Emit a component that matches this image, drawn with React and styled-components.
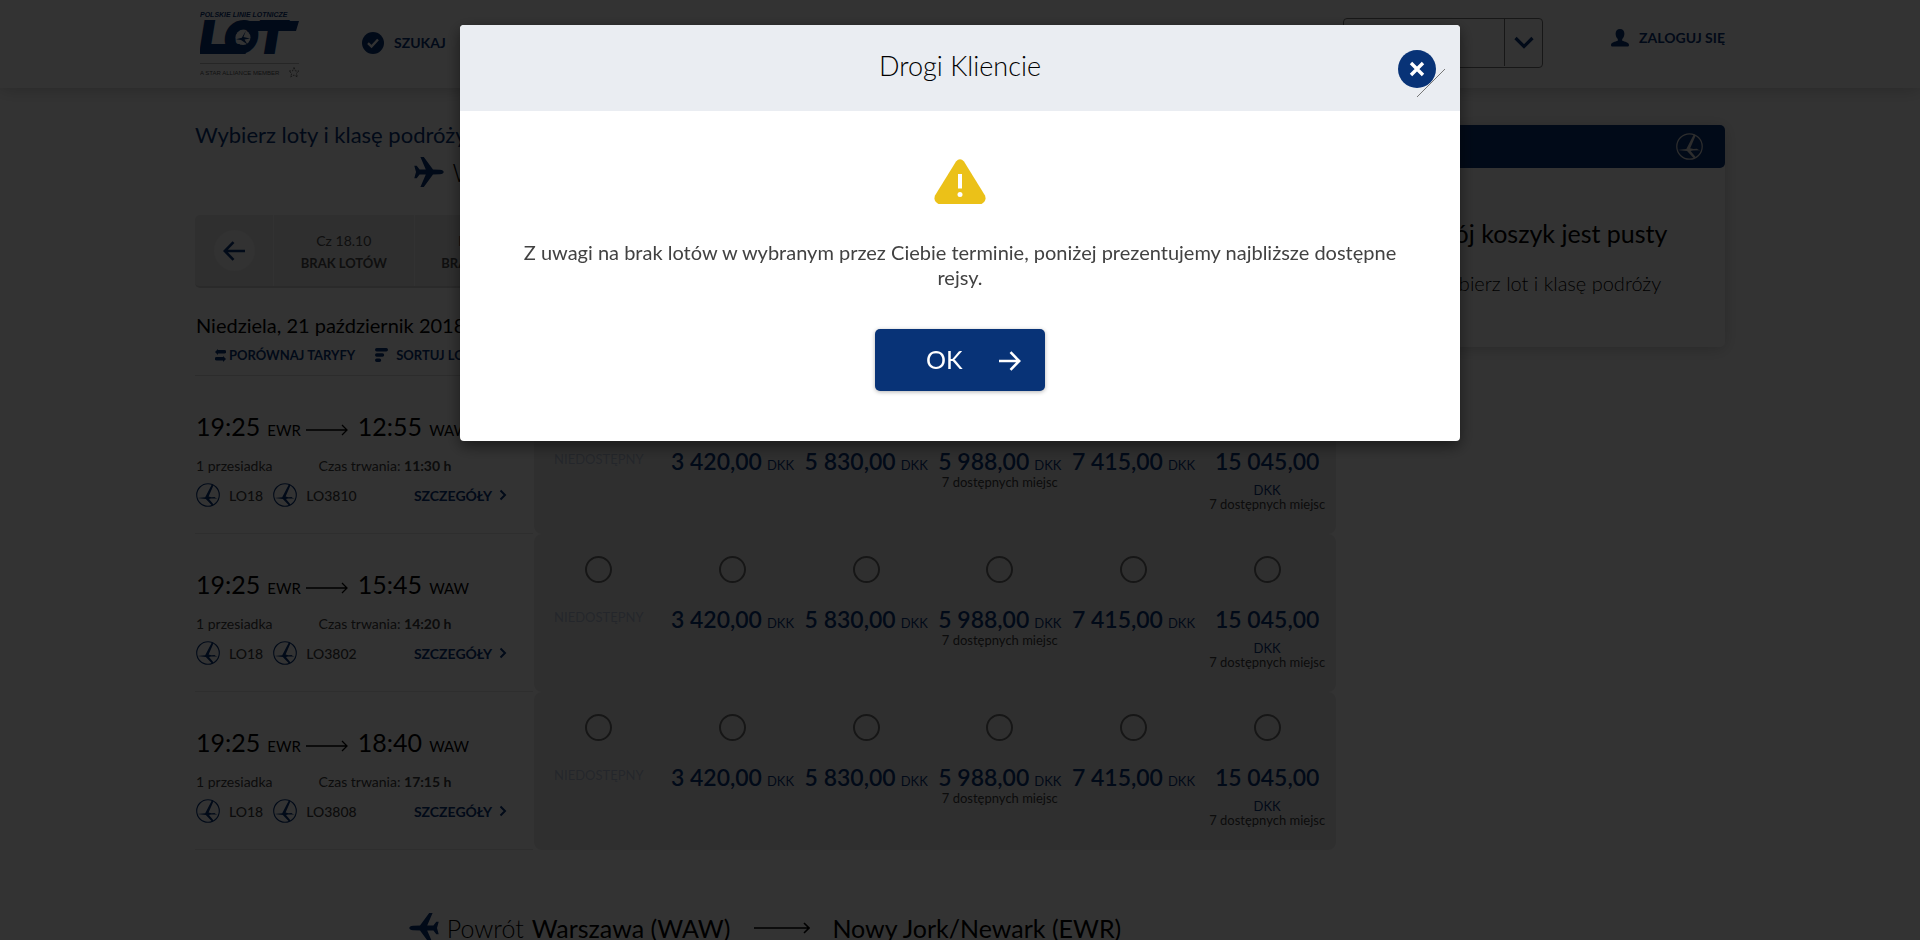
import React from "react";
import styled, { createGlobalStyle } from "styled-components";

const NAVY = "#083377";

const GlobalStyle = createGlobalStyle`
  *, *::before, *::after { box-sizing: border-box; }
  html, body { margin: 0; overflow: hidden; }
  body { background: #fff; color: #000; font-family: Lato, "Open Sans", sans-serif; font-size: 14px; }
  a { color: inherit; text-decoration: none; }
  button, select { font-family: inherit; cursor: pointer; }
  h1, h2, h3, p, ul { margin: 0; padding: 0; font-weight: 400; }
  ul { list-style: none; }
`;

const Header = styled.header`
  height: 88px;
  box-shadow: 0 2px 16px rgba(0, 0, 0, 0.2);
`;

const Container = styled.div`
  max-width: 1530px;
  margin: 0 auto;
  display: flex;
`;

const HeaderInner = styled(Container)`
  align-items: flex-start;
`;

const LogoLink = styled.a`
  padding: 10px 0 0 5px;
  svg { display: block; }
`;

const NavLink = styled.a`
  display: flex;
  align-items: center;
  gap: 10px;
  color: ${NAVY};
  font-weight: 700;
  line-height: 22px;
`;

const SearchLink = styled(NavLink)`
  margin: 32px 0 0 58px;
`;

const LoginLink = styled(NavLink)`
  margin: 27px 0 0 68px;
`;

const SelectBox = styled.div`
  position: relative;
  width: 200px;
  height: 50px;
  margin: 18px 0 0 auto;
  border: 1px solid #757575;
  border-radius: 4px;
`;

const MarketSelect = styled.select`
  appearance: none;
  width: 100%;
  height: 100%;
  border: 0;
  background: transparent;
`;

const SelectArrow = styled.span`
  position: absolute;
  top: 0;
  right: 0;
  width: 38px;
  height: 47px;
  border-left: 1px solid #757575;
  display: flex;
  align-items: center;
  justify-content: center;
  pointer-events: none;
`;

const Page = styled(Container)`
  gap: 30px;
  padding-top: 37px;
  align-items: flex-start;
`;

const Results = styled.main`
  flex: 1;
  min-width: 0;
`;

const PageTitle = styled.h1`
  color: ${NAVY};
  font-size: 22px;
  line-height: 26px;
  margin-top: -3px;
`;

const Route = styled.h2`
  display: flex;
  align-items: center;
  justify-content: center;
  gap: 8px;
  height: 34px;
  font-size: 25px;
  line-height: 34px;
  margin-top: ${(p) => (p.$return ? "61px" : "7px")};
  svg { flex: none; }
`;

const RouteLabel = styled.span`
  font-weight: 300;
`;

const RouteArrow = styled.span`
  display: flex;
  margin: 0 14px 0 16px;
`;

const Days = styled.ul`
  display: flex;
  height: 73px;
  margin-top: 26px;
  background: #ebebeb;
  border-bottom: 2px solid #d2d2d2;
  border-radius: 5px;
`;

const Day = styled.li`
  flex: 1;
  border-left: 1px solid #fafafa;
  text-align: center;
  padding-top: 15px;
  color: #4a4a4a;
  line-height: 22px;
`;

const DayStatus = styled.strong`
  display: block;
  font-size: 13px;
`;

const DayArrowCell = styled.li`
  width: 78px;
  display: flex;
  align-items: center;
  justify-content: center;
  border-left: ${(p) => (p.$last ? "1px solid #fafafa" : "0")};
`;

const DayArrow = styled.button`
  width: 41px;
  height: 41px;
  border: 0;
  padding: 0;
  border-radius: 50%;
  background: #f7f7f7;
  display: flex;
  align-items: center;
  justify-content: center;
`;

const DateTitle = styled.h3`
  font-size: 20px;
  line-height: 24px;
  margin-top: 25px;
  padding-left: 1px;
`;

const Tools = styled.div`
  display: flex;
  align-items: center;
  gap: 20px;
  height: 39px;
  padding: 0 0 2px 20px;
  border-bottom: 1px solid #dcdcdc;
`;

const ToolLink = styled.a`
  display: flex;
  align-items: center;
  gap: ${(p) => (p.$wide ? "8px" : "3px")};
  color: ${NAVY};
  font-size: 13px;
  font-weight: 700;
`;

const FlightRow = styled.li`
  display: flex;
  height: 158px;
`;

const FlightInfo = styled.div`
  width: 338px;
  flex: none;
  border-bottom: 1px solid #e6e6e6;
  padding: 34px 26px 0 1px;
`;

const Times = styled.div`
  display: flex;
  align-items: baseline;
  font-size: 25px;
  line-height: 32px;
`;

const Airport = styled.span`
  font-size: 15px;
  margin-left: 7px;
`;

const TimeArrow = styled.span`
  margin: 0 10px 0 5px;
  svg { display: block; }
`;

const Stops = styled.div`
  display: flex;
  gap: 46px;
  margin-top: 9px;
  line-height: 22px;
  color: #3c3c3c;
`;

const Flights = styled.div`
  display: flex;
  align-items: center;
  margin-top: 6px;
  height: 24px;
  color: #3c3c3c;
  font-weight: 500;
`;

const FlightNo = styled.span`
  display: flex;
  align-items: center;
  gap: 9px;
  margin-right: 10px;
`;

const DetailsLink = styled.a`
  display: flex;
  align-items: center;
  gap: 7px;
  margin-left: auto;
  color: ${NAVY};
  font-weight: 700;
`;

const Fares = styled.div`
  flex: 1;
  display: grid;
  grid-template-columns: repeat(6, minmax(0, 1fr));
  background: #ebebeb;
  border-radius: 8px;
  margin-left: 1px;
  margin-right: -1px;
`;

const Fare = styled.label`
  display: flex;
  flex-direction: column;
  align-items: center;
  padding: 22px 4px 0 0;
  color: ${NAVY};
`;

const FareRadio = styled.input`
  appearance: none;
  flex: none;
  width: 27px;
  height: 27px;
  margin: 0 0 18px;
  border: 2px solid #6e6e6e;
  border-radius: 50%;
`;

const Price = styled.span`
  display: flex;
  flex-wrap: wrap;
  align-items: baseline;
  justify-content: center;
  column-gap: 5px;
  font-size: 23px;
  font-weight: 600;
  line-height: 36px;
`;

const Currency = styled.span`
  font-size: 13px;
  font-weight: 400;
  line-height: 22px;
`;

const Seats = styled.span`
  color: #3c3c3c;
  font-size: 13px;
  line-height: 16px;
  margin-top: -5px;
`;

const Unavailable = styled.span`
  color: #b4bfd4;
  font-size: 13px;
  line-height: 32px;
`;

const Basket = styled.aside`
  width: 360px;
  flex: none;
  height: 222px;
  border-radius: 5px;
  box-shadow: 0 2px 16px rgba(0, 0, 0, 0.2);
  text-align: center;
`;

const BasketHead = styled.div`
  display: flex;
  align-items: center;
  justify-content: flex-end;
  height: 43px;
  padding-right: 22px;
  color: #e0e0e0;
  background: ${NAVY};
  border-radius: 5px;
`;

const BasketTitle = styled.h2`
  font-size: 25px;
  line-height: 30px;
  margin-top: 50px;
`;

const BasketText = styled.p`
  font-size: 20px;
  font-weight: 300;
  line-height: 24px;
  margin-top: 23px;
`;

const Overlay = styled.div`
  position: fixed;
  inset: 0;
  padding: 25px 20px;
  background: rgba(0, 0, 0, 0.8);
`;

const Dialog = styled.section`
  max-width: 1000px;
  margin: 0 auto;
  background: #fff;
  border-radius: 4px;
  overflow: hidden;
  box-shadow: 0 5px 15px rgba(0, 0, 0, 0.5);
`;

const DialogHead = styled.div`
  position: relative;
  height: 86px;
  padding-top: 24px;
  background: #eaedf2;
  text-align: center;
`;

const DialogTitle = styled.h2`
  font-size: 27px;
  font-weight: 300;
  line-height: 34px;
`;

const CloseButton = styled.button`
  position: absolute;
  top: 25px;
  right: 15px;
  width: 48px;
  height: 48px;
  padding: 0;
  border: 0;
  background: transparent;
  svg { display: block; }
`;

const DialogBody = styled.div`
  display: flex;
  flex-direction: column;
  align-items: center;
  padding: 48px 60px 50px;
`;

const Message = styled.p`
  margin-top: 35px;
  color: #424242;
  font-size: 20px;
  line-height: 25px;
  text-align: center;
`;

const OkButton = styled.button`
  display: flex;
  align-items: center;
  justify-content: space-between;
  width: 170px;
  height: 62px;
  margin-top: 39px;
  padding: 0 24px 2px 51px;
  border: 0;
  border-radius: 5px;
  background: ${NAVY};
  color: #fff;
  font-size: 25px;
  box-shadow: 0 1px 4px rgba(0, 0, 0, 0.3);
  svg { margin-top: 4px; }
`;

const Crane = ({ size }) => (
  <svg width={size} height={size} viewBox="0 0 24 24" aria-hidden="true">
    <circle cx="12" cy="12" r="11.3" fill="none" stroke="currentColor" strokeWidth="1.1" />
    <path
      d="M15.8 1.4 17.6 2 12.6 13.6 15.5 14.2 18.6 14 19.8 14.9 21.8 15.4 15 15.6 13 16 17.6 21.6 16 22.6 9.8 16 1.4 15 9.2 14.2Z"
      fill="currentColor"
    />
  </svg>
);

const EmblemColor = styled.span`
  display: flex;
  color: ${NAVY};
`;

const Emblem = () => (
  <EmblemColor><Crane size={24} /></EmblemColor>
);

const Plane = ({ left }) => (
  <svg width="30" height="30" viewBox="0 0 30 30" aria-hidden="true">
    <path
      transform={left ? "translate(30 0) scale(-1 1)" : undefined}
      d="M.3 8.8h2.4L5.6 12.6h6.2L6.4 0h3.4L19 12.4l7 .3c2.4.2 3.7 1.2 3.7 2.3s-1.3 2.1-3.7 2.3l-7 .3L9.8 30H6.4l5.4-12.6H5.6L2.7 21.2H.3L2 15Z"
      fill={NAVY}
    />
  </svg>
);

const LongArrow = ({ width, stroke = 1.6 }) => (
  <svg width={width} height="12" viewBox={`0 0 ${width} 12`} aria-hidden="true">
    <path
      d={`M0 6H${width - 1}M${width - 6} 1 ${width - 1} 6 ${width - 6} 11`}
      fill="none"
      stroke="#000"
      strokeWidth={stroke}
    />
  </svg>
);

const ShortArrow = ({ left, color }) => (
  <svg width="22" height="20" viewBox="0 0 22 20" aria-hidden="true">
    <path
      transform={left ? "translate(22 0) scale(-1 1)" : undefined}
      d="M0 10H20M11.5 1.2 20.2 10 11.5 18.8"
      fill="none"
      stroke={color}
      strokeWidth="2.6"
    />
  </svg>
);

const Logo = () => (
  <svg width="104" height="68" viewBox="0 0 104 68" role="img" aria-label="LOT">
    <text x="0" y="7" fontFamily="Liberation Sans" fontSize="7" fontWeight="700" fontStyle="italic" fill={NAVY}>
      POLSKIE LINIE LOTNICZE
    </text>
    <text x="0" y="43" fontFamily="Inter" fontSize="44" fontWeight="900" fontStyle="italic" fill={NAVY} stroke={NAVY} strokeWidth="2">
      LOT
    </text>
    <path d="M46 11H99L96 21H52ZM2 34H40L46 44H0Z" fill={NAVY} />
    <circle cx="43" cy="27.5" r="7.5" fill="#fff" />
    <path d="M46 20.5 43.5 27 50 28.5 44.5 29.5 47.5 34.5 41 30 36 29.2 41.8 27.8Z" fill={NAVY} />
    <path d="M0 53.5H99" stroke="#bdbdbd" />
    <text x="0" y="65" fontFamily="Liberation Sans" fontSize="6" fill="#555">
      A STAR ALLIANCE MEMBER
    </text>
    <path d="M94 57.5 95.5 61 99 61 96.3 63.4 97.4 67 94 65 90.6 67 91.7 63.4 89 61 92.5 61Z" fill="none" stroke="#777" strokeDasharray="2 1" />
  </svg>
);

const FARES = [
  { id: "a" },
  { id: "b", price: "3 420,00" },
  { id: "c", price: "5 830,00" },
  { id: "d", price: "5 988,00", seats: "7 dostępnych miejsc" },
  { id: "e", price: "7 415,00" },
  { id: "f", price: "15 045,00", seats: "7 dostępnych miejsc" },
];

const FLIGHTS = [
  { arrival: "12:55", duration: "11:30 h", second: "LO3810" },
  { arrival: "15:45", duration: "14:20 h", second: "LO3802" },
  { arrival: "18:40", duration: "17:15 h", second: "LO3808" },
];

const DAYS = [
  { id: 18, date: "Cz 18.10", status: "BRAK LOTÓW" },
  { id: 19, date: "Pt 19.10", status: "BRAK LOTÓW" },
  { id: 20 },
  { id: 21 },
  { id: 22 },
  { id: 23 },
  { id: 24 },
];

const Flight = ({ arrival, duration, second }) => (
  <FlightRow>
    <FlightInfo>
      <Times>
        19:25<Airport>EWR</Airport>
        <TimeArrow><LongArrow width={42} stroke={1.3} /></TimeArrow>
        {arrival}<Airport>WAW</Airport>
      </Times>
      <Stops>
        <span>1 przesiadka</span>
        <span>Czas trwania: <b>{duration}</b></span>
      </Stops>
      <Flights>
        <FlightNo><Emblem />LO18</FlightNo>
        <FlightNo><Emblem />{second}</FlightNo>
        <DetailsLink href="#details">
          SZCZEGÓŁY
          <svg width="8" height="12" viewBox="0 0 8 12" aria-hidden="true">
            <path d="M1.5 1.5 6 6 1.5 10.5" fill="none" stroke={NAVY} strokeWidth="2" />
          </svg>
        </DetailsLink>
      </Flights>
    </FlightInfo>
    <Fares>
      {FARES.map((fare) => (
        <Fare key={fare.id}>
          <FareRadio type="radio" name="fare" value={second + fare.id} disabled={!fare.price} />
          {fare.price ? (
            <Price>{fare.price}<Currency>DKK</Currency></Price>
          ) : (
            <Unavailable>NIEDOSTĘPNY</Unavailable>
          )}
          {fare.seats && <Seats>{fare.seats}</Seats>}
        </Fare>
      ))}
    </Fares>
  </FlightRow>
);

export default function App() {
  return (
    <>
      <GlobalStyle />
      <Header>
        <HeaderInner>
          <LogoLink href="#home"><Logo /></LogoLink>
          <SearchLink href="#search">
            <svg width="22" height="22" viewBox="0 0 22 22" aria-hidden="true">
              <circle cx="11" cy="11" r="11" fill={NAVY} />
              <path d="M6 11.2 9.5 14.5 16 7.5" fill="none" stroke="#fff" strokeWidth="2.4" />
            </svg>
            SZUKAJ
          </SearchLink>
          <SelectBox>
            <MarketSelect aria-label="Kraj" />
            <SelectArrow>
              <svg width="20" height="13" viewBox="0 0 20 13" aria-hidden="true">
                <path d="M1.5 2 10 10.5 18.5 2" fill="none" stroke={NAVY} strokeWidth="3.2" />
              </svg>
            </SelectArrow>
          </SelectBox>
          <LoginLink href="#login">
            <svg width="18" height="18" viewBox="0 0 18 18" aria-hidden="true">
              <path d="M9 0c2.8 0 4.4 1.9 4.4 4.8 0 2.2-.9 4.3-2.2 5.3v1.7c2.5.8 6.8 1.7 6.8 4.2 0 1-.6 1.5-1.6 1.5H1.6C.6 17.5 0 17 0 16c0-2.5 4.3-3.4 6.8-4.2v-1.7C5.5 9.1 4.6 7 4.6 4.8 4.6 1.9 6.2 0 9 0Z" fill={NAVY} />
            </svg>
            ZALOGUJ SIĘ
          </LoginLink>
        </HeaderInner>
      </Header>

      <Page>
        <Results>
          <PageTitle>Wybierz loty i klasę podróży</PageTitle>
          <Route>
            <Plane />
            <RouteLabel>Wylot</RouteLabel>
            Nowy Jork/Newark (EWR)
            <RouteArrow><LongArrow width={56} /></RouteArrow>
            Warszawa (WAW)
          </Route>
          <Days>
            <DayArrowCell>
              <DayArrow aria-label="Poprzedni dzień"><ShortArrow left color={NAVY} /></DayArrow>
            </DayArrowCell>
            {DAYS.map((day) => (
              <Day key={day.id}>
                {day.date}
                {day.status && <DayStatus>{day.status}</DayStatus>}
              </Day>
            ))}
            <DayArrowCell $last>
              <DayArrow aria-label="Następny dzień"><ShortArrow color={NAVY} /></DayArrow>
            </DayArrowCell>
          </Days>
          <DateTitle>Niedziela, 21 październik 2018</DateTitle>
          <Tools>
            <ToolLink href="#compare">
              <svg width="11" height="13" viewBox="0 0 11 13" aria-hidden="true">
                <path d="M3 0v1h6.5a1.75 1.75 0 0 1 0 3.5H3V6L0 3ZM8 7v1H1.5a1.75 1.75 0 0 0 0 3.5H8V13l3-3Z" fill={NAVY} />
              </svg>
              PORÓWNAJ TARYFY
            </ToolLink>
            <ToolLink href="#sort" $wide>
              <svg width="13" height="14" viewBox="0 0 13 14" aria-hidden="true">
                <path d="M1.7 1.8H11.3M1.7 7H7.5M1.7 12.2H4.5" stroke={NAVY} strokeWidth="3.4" strokeLinecap="round" />
              </svg>
              SORTUJ LOTY
            </ToolLink>
          </Tools>
          <ul>
            {FLIGHTS.map((f) => <Flight key={f.second} {...f} />)}
          </ul>
          <Route $return>
            <Plane left />
            <RouteLabel>Powrót</RouteLabel>
            Warszawa (WAW)
            <RouteArrow><LongArrow width={56} /></RouteArrow>
            Nowy Jork/Newark (EWR)
          </Route>
        </Results>

        <Basket>
          <BasketHead><Crane size={27} /></BasketHead>
          <BasketTitle>Twój koszyk jest pusty</BasketTitle>
          <BasketText>Wybierz lot i klasę podróży</BasketText>
        </Basket>
      </Page>

      <Overlay>
        <Dialog role="dialog" aria-modal="true" aria-labelledby="dialog-title">
          <DialogHead>
            <DialogTitle id="dialog-title">Drogi Kliencie</DialogTitle>
            <CloseButton aria-label="Zamknij">
              <svg width="48" height="48" viewBox="0 0 48 48" aria-hidden="true">
                <circle cx="20" cy="19" r="19" fill={NAVY} />
                <path d="M14 13 26 25M26 13 14 25" stroke="#fff" strokeWidth="3.4" />
                <path d="M20 47 48 19" stroke="#777" strokeWidth="1" />
              </svg>
            </CloseButton>
          </DialogHead>
          <DialogBody>
            <svg width="52" height="46" viewBox="0 0 52 46" aria-hidden="true">
              <path d="M22 2.5Q26-1.8 30 2.5L51 36.500Q53 42 47.500 45H4.500Q-1 42 1 36.500Z" fill="#ebc118" />
              <path d="M24 15h4v14.5h-4Z" fill="#fff" />
              <circle cx="26" cy="35.5" r="2.5" fill="#fff" />
            </svg>
            <Message>
              Z uwagi na brak lotów w wybranym przez Ciebie terminie, poniżej prezentujemy najbliższe dostępne rejsy.
            </Message>
            <OkButton>
              OK
              <ShortArrow color="#fff" />
            </OkButton>
          </DialogBody>
        </Dialog>
      </Overlay>
    </>
  );
}
